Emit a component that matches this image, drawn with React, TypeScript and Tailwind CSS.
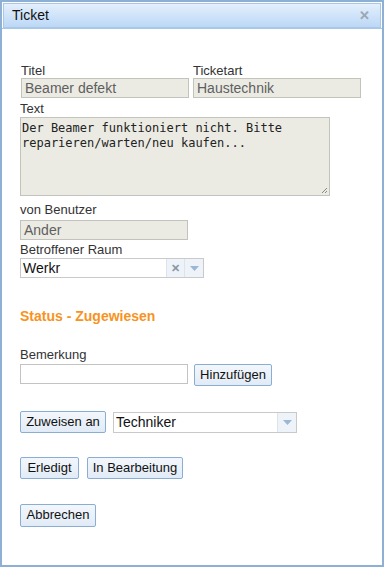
import React from "react";

const font = { fontFamily: '"Liberation Sans", Arial, sans-serif' };

// Small button with the light blue theme look
const Btn = ({ children, className = "" }: { children: React.ReactNode; className?: string }) => (
  <button
    className={
      "h-[22px] px-0 whitespace-nowrap border border-[#8aaed3] rounded-[2px] bg-gradient-to-b from-[#f3f7fc] to-[#e1ebf6] text-[13px] leading-[20px] text-[#111] " +
      className
    }
  >
    {children}
  </button>
);

const Label = ({ children, className = "" }: { children: React.ReactNode; className?: string }) => (
  <div className={"text-[13px] leading-[15px] text-[#333] " + className}>{children}</div>
);

const ReadOnly = ({ value, w }: { value: string; w: string }) => (
  <div
    className={
      "h-[20px] border border-[#c3c3bd] bg-[#ebebe4] px-[3px] text-[14px] leading-[18px] text-[#5f5f5f] " + w
    }
  >
    {value}
  </div>
);

const Arrow = () => (
  <svg width="9" height="5" viewBox="0 0 9 5">
    <path d="M0 0h9L4.5 5z" fill="#9db6d3" />
  </svg>
);

export default function App() {
  return (
    <div style={font} className="w-[384px] h-[567px] bg-white border-2 border-[#8eb0d4] flex flex-col overflow-hidden">
      {/* title bar */}
      <div className="h-[25px] mx-px mt-px border border-[#a9c8e8] bg-gradient-to-b from-[#e3effc] to-[#bcd8f6] flex items-center justify-between pl-[8px] pr-[10px]">
        <span className="text-[14px] text-[#111]">Ticket</span>
        <span className="text-[13px] font-bold text-[#9aa7b5]">✕</span>
      </div>

      <div className="flex-1 border-t border-[#a9c8e8] pl-[18px] flex flex-col">
        {/* Titel / Ticketart */}
        <div className="flex gap-[4px] mt-[34px] pl-px">
          <div>
            <Label>Titel</Label>
            <ReadOnly value="Beamer defekt" w="w-[168px]" />
          </div>
          <div>
            <Label>Ticketart</Label>
            <ReadOnly value="Haustechnik" w="w-[168px]" />
          </div>
        </div>

        <Label className="mt-[3px]">Text</Label>
        <div
          className="relative mt-px w-[310px] h-[79px] border border-[#c3c3bd] bg-[#ebebe4] px-px pt-[3px] text-[12px] leading-[15px] text-[#222] whitespace-pre-wrap"
          style={{ fontFamily: '"DejaVu Sans Mono", monospace' }}
        >
          {"Der Beamer funktioniert nicht. Bitte\nreparieren/warten/neu kaufen..."}
          <svg className="absolute right-px bottom-px" width="7" height="7" viewBox="0 0 7 7">
            <path d="M6 1L1 6M6 4L4 6" stroke="#888" strokeWidth="1" />
          </svg>
        </div>

        <Label className="mt-[6px]">von Benutzer</Label>
        <div className="mt-[3px]">
          <ReadOnly value="Ander" w="w-[168px]" />
        </div>

        <Label className="mt-[2px]">Betroffener Raum</Label>
        <div className="mt-px w-[184px] h-[20px] border border-[#c9c9c9] flex">
          <div className="flex-1 px-[2px] text-[14px] leading-[18px] text-[#111]">Werkr</div>
          <div className="w-[18px] bg-[#eef3f9] border-l border-[#dde3ea] flex items-center justify-center text-[11px] font-bold text-[#8a96a3]">✕</div>
          <div className="w-[19px] bg-[#eef3f9] border-l border-[#dde3ea] flex items-center justify-center">
            <Arrow />
          </div>
        </div>

        <div className="mt-[29px] text-[14px] leading-[18px] font-bold text-[#f7931e]">Status - Zugewiesen</div>

        <Label className="mt-[22px]">Bemerkung</Label>
        <div className="mt-[2px] flex gap-[6px] items-start">
          <div className="w-[168px] h-[20px] border border-[#c3c3c3] bg-white" />
          <Btn className="w-[78px]">Hinzufügen</Btn>
        </div>

        <div className="mt-[25px] flex gap-[7px] items-start">
          <Btn className="w-[86px]">Zuweisen an</Btn>
          <div className="mt-px w-[184px] h-[21px] border border-[#c9c9c9] flex">
            <div className="flex-1 px-[2px] text-[14px] leading-[19px] text-[#111]">Techniker</div>
            <div className="w-[19px] bg-[#eef3f9] border-l border-[#dde3ea] flex items-center justify-center">
              <Arrow />
            </div>
          </div>
        </div>

        <div className="mt-[24px] flex gap-[8px]">
          <Btn className="w-[59px]">Erledigt</Btn>
          <Btn className="w-[96px]">In Bearbeitung</Btn>
        </div>

        <div className="mt-[23px]">
          <Btn className="w-[76px] h-[23px]">Abbrechen</Btn>
        </div>
      </div>
    </div>
  );
}
